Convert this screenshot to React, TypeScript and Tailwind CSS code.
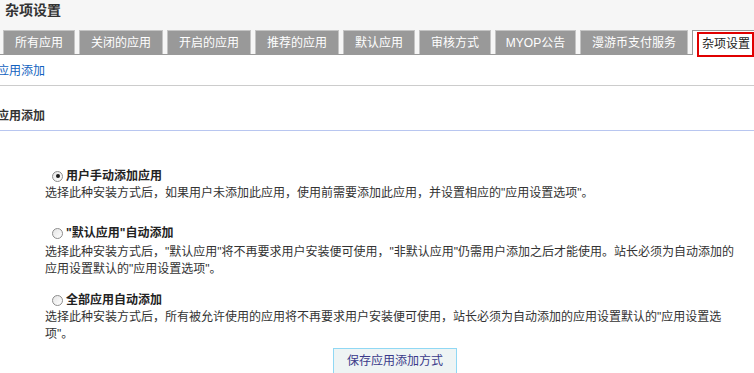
import React from "react";

const font = { fontFamily: '"Liberation Sans", "Noto Sans CJK SC", sans-serif' };

const tabs = [
  { label: "所有应用", w: "w-[72px]" },
  { label: "关闭的应用", w: "w-[84px]" },
  { label: "开启的应用", w: "w-[84px]" },
  { label: "推荐的应用", w: "w-[84px]" },
  { label: "默认应用", w: "w-[72px]" },
  { label: "审核方式", w: "w-[72px]" },
  { label: "MYOP公告", w: "w-[81px]" },
  { label: "漫游币支付服务", w: "w-[108px]" },
];

function Radio({ checked }: { checked?: boolean }) {
  return (
    <span className="w-[11px] h-[11px] rounded-full border border-[#8c8c8c] bg-gradient-to-br from-[#e4e4e4] to-white flex items-center justify-center shrink-0">
      {checked && <span className="w-[4px] h-[4px] rounded-full bg-[#1a1a1a]" />}
    </span>
  );
}

function Option({
  title,
  checked,
  lines,
  className,
}: {
  title: string;
  checked?: boolean;
  lines: string[];
  className?: string;
}) {
  return (
    <div className={className}>
      <div className="flex items-center gap-[3px] pl-[7px] h-[18px] leading-[18px] font-bold text-[#222]">
        <Radio checked={checked} />
        <span>{title}</span>
      </div>
      <div className="leading-[17px] text-[#333] whitespace-nowrap">
        {lines.map((l) => (
          <div key={l}>{l}</div>
        ))}
      </div>
    </div>
  );
}

export default function App() {
  return (
    <div className="w-[754px] h-[373px] overflow-hidden bg-white text-[12px]" style={font}>
      {/* header + tabs */}
      <div className="bg-[#f6f6f6]">
        <div className="pl-[5px] h-[20px] leading-[20px] text-[14px] font-bold text-[#333]">杂项设置</div>
        <div className="mt-[10px] flex items-end gap-[4px] pl-[3px] border-b border-[#999]">
          {tabs.map((t) => (
            <div
              key={t.label}
              className={`${t.w} h-[24px] flex items-center justify-center bg-[#999] border border-[#c4c4c4] border-b-0 text-white`}
            >
              {t.label}
            </div>
          ))}
          <div className="relative z-10 flex-1 h-[25px] -mb-px bg-white border-l border-t border-[#999] pl-[4px] pt-[1px]">
            <span className="block w-[57px] h-[25px] border-2 border-[#e00000] pl-[3px] leading-[21px] text-[#222] whitespace-nowrap">
              杂项设置
            </span>
          </div>
        </div>
      </div>

      {/* sub nav */}
      <div className="pt-[7px] pb-[5px] border-b border-[#ccc]">
        <a className="-ml-[3px] block h-[18px] leading-[18px] text-[#1262c0]">应用添加</a>
      </div>

      {/* section heading */}
      <div className="pt-[21px] pb-[5px] border-b border-[#b8c6f0]">
        <div className="-ml-[3px] h-[18px] leading-[18px] font-bold text-[#333]">应用添加</div>
      </div>

      {/* options */}
      <div className="pl-[45px] pt-[36px]">
        <Option
          checked
          title="用户手动添加应用"
          lines={['选择此种安装方式后，如果用户未添加此应用，使用前需要添加此应用，并设置相应的"应用设置选项"。']}
        />
        <Option
          className="mt-[22px] [&>div:first-child]:mb-[2px]"
          title={'"默认应用"自动添加'}
          lines={[
            '选择此种安装方式后，"默认应用"将不再要求用户安装便可使用，"非默认应用"仍需用户添加之后才能使用。站长必须为自动添加的',
            '应用设置默认的"应用设置选项"。',
          ]}
        />
        <Option
          className="mt-[13px]"
          title="全部应用自动添加"
          lines={[
            '选择此种安装方式后，所有被允许使用的应用将不再要求用户安装便可使用，站长必须为自动添加的应用设置默认的"应用设置选',
            '项"。',
          ]}
        />
      </div>

      <button className="ml-[333px] mt-[5px] h-[27px] px-[13px] border border-[#90d8f4] bg-[#eef4f4] text-[#3a3a8a] leading-[25px]">
        保存应用添加方式
      </button>
    </div>
  );
}
